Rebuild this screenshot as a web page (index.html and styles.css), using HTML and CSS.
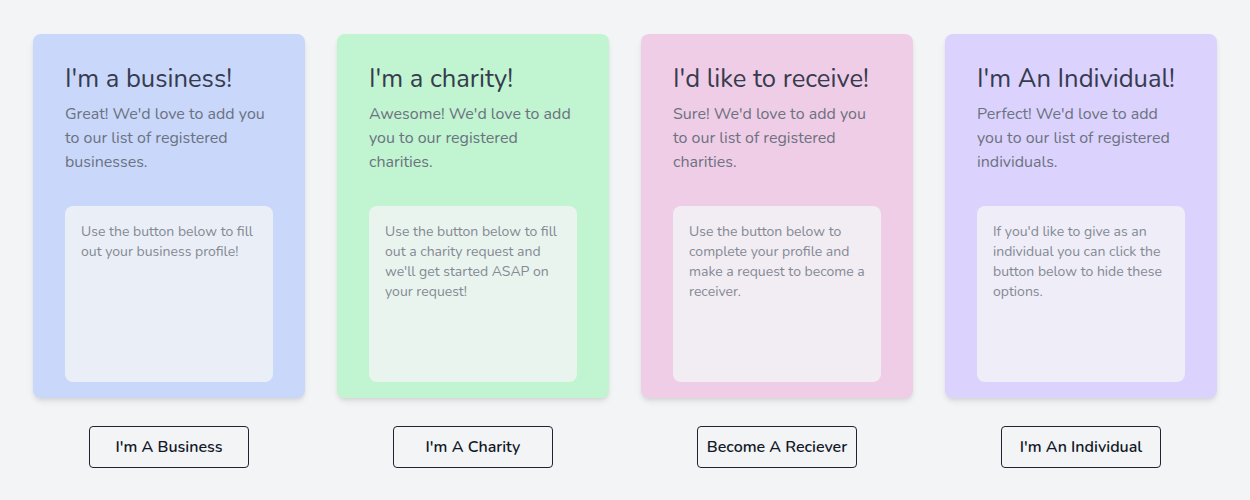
FILE: index.html
```html
<!DOCTYPE html>
<html>
<head>
<meta charset="utf-8">
<link rel="stylesheet" href="styles.css">
</head>
<body>
<div class="grid">
  <div class="col">
    <div class="card blue">
      <h2 class="title">I'm a business!</h2>
      <p class="lead">Great! We'd love to add you to our list of registered businesses.</p>
      <div class="inner">Use the button below to fill out your business profile!</div>
    </div>
    <button class="btn">I'm A Business</button>
  </div>
  <div class="col">
    <div class="card green">
      <h2 class="title">I'm a charity!</h2>
      <p class="lead">Awesome! We'd love to add you to our registered charities.</p>
      <div class="inner">Use the button below to fill out a charity request and we'll get started ASAP on your request!</div>
    </div>
    <button class="btn">I'm A Charity</button>
  </div>
  <div class="col">
    <div class="card pink">
      <h2 class="title">I'd like to receive!</h2>
      <p class="lead">Sure! We'd love to add you to our list of registered charities.</p>
      <div class="inner">Use the button below to complete your profile and make a request to become a receiver.</div>
    </div>
    <button class="btn">Become A Reciever</button>
  </div>
  <div class="col">
    <div class="card purple">
      <h2 class="title">I'm An Individual!</h2>
      <p class="lead">Perfect! We'd love to add you to our list of registered individuals.</p>
      <div class="inner">If you'd like to give as an individual you can click the button below to hide these options.</div>
    </div>
    <button class="btn">I'm An Individual</button>
  </div>
</div>
</body>
</html>
```
FILE: styles.css
```css
* { box-sizing: border-box; }
html, body { margin: 0; padding: 0; }
body {
  background: #f3f4f6;
  font-family: "Nunito", "Lato", "Noto Sans", sans-serif;
  width: 1250px;
  height: 500px;
  overflow: hidden;
}
.grid {
  display: grid;
  grid-template-columns: repeat(4, 272px);
  column-gap: 32px;
  padding: 34px 33px 0;
}
.col {
  display: flex;
  flex-direction: column;
  align-items: center;
}
.card {
  width: 272px;
  height: 364px;
  border-radius: 8px;
  padding: 32px 32px 16px;
  box-shadow: 0 4px 6px -1px rgba(0,0,0,0.1), 0 2px 4px -1px rgba(0,0,0,0.06);
  display: flex;
  flex-direction: column;
}
.blue { background: #c9d7fb; }
.green { background: #c1f4d0; }
.pink { background: #f0cde6; }
.purple { background: #dbd2fd; }
.title {
  margin: 0;
  font-size: 25.6px;
  line-height: 26px;
  font-weight: 400;
  color: #363b4e;
}
.lead {
  margin: 10px 0 0;
  font-size: 16px;
  line-height: 24px;
  color: #6b7280;
}
.inner {
  margin-top: auto;
  height: 176px;
  border-radius: 8px;
  background: rgba(243,244,246,0.8);
  padding: 16px 16px;
  font-size: 14px;
  line-height: 20px;
  color: #848993;
}
.btn {
  margin-top: 28px;
  width: 160px;
  height: 42px;
  border: 1px solid #1f2433;
  border-radius: 4px;
  background: transparent;
  font-family: inherit;
  font-size: 16px;
  font-weight: 600;
  color: #111827;
  cursor: pointer;
}
```
